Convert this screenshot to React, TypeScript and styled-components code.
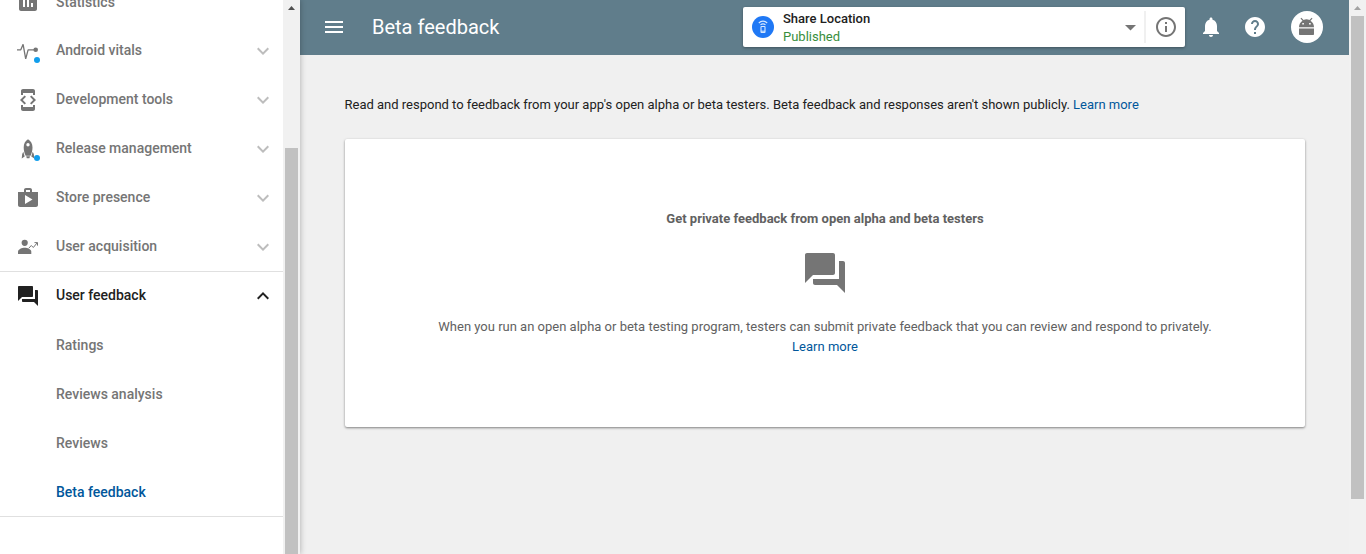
import React from "react";
import styled, { createGlobalStyle } from "styled-components";

const GlobalStyle = createGlobalStyle`
  * { box-sizing: border-box; }
  html, body { margin: 0; padding: 0; overflow: hidden; }
  body { font-family: Roboto, "Liberation Sans", sans-serif; font-size: 13px; color: #212121; }
  a { color: #01579b; text-decoration: none; }
`;

const Page = styled.div`
  display: flex;
  width: 100vw;
  height: 100vh;
  overflow: hidden;
  background: #f0f0f0;
`;

const Sidebar = styled.aside`
  display: flex;
  flex: none;
  width: 300px;
  z-index: 1;
  background: #fff;
  box-shadow: 0 0 6px rgba(0, 0, 0, 0.3);
`;

const Nav = styled.nav`
  width: 283px;
  margin-top: -23px;
`;

const Track = styled.div`
  display: flex;
  flex-direction: column;
  align-items: center;
  flex: none;
  width: 17px;
  height: 100%;
  background: #f1f1f1;
`;

const TrackArrow = styled.div<{ $color: string }>`
  width: 7px;
  height: 4px;
  margin-top: 6px;
  background: ${(p) => p.$color};
  clip-path: polygon(50% 0, 100% 100%, 0 100%);
`;

const Thumb = styled.div<{ $gap: number; $height: number }>`
  flex: none;
  width: 13px;
  height: ${(p) => p.$height}px;
  margin-top: ${(p) => p.$gap}px;
  background: #c1c1c1;
`;

const NavRow = styled.div<{ $open?: boolean }>`
  display: flex;
  align-items: flex-start;
  height: 49px;
  padding: ${(p) => (p.$open ? "12px" : "13px")} 8px 0 16px;
  border-top: ${(p) => (p.$open ? "1px solid #e0e0e0" : "0")};
  color: ${(p) => (p.$open ? "#212121" : "#757575")};
`;

const NavIcon = styled.span`
  position: relative;
  width: 24px;
  height: 24px;
  margin-right: 16px;
`;

const AlertDot = styled.i`
  position: absolute;
  left: 18px;
  top: 18px;
  width: 6px;
  height: 6px;
  border-radius: 50%;
  background: #119eec;
`;

const NavLabel = styled.span<{ $leaf?: boolean }>`
  flex: 1;
  font-size: 14px;
  font-weight: 500;
  line-height: ${(p) => (p.$leaf ? 24 : 22)}px;
`;

const Chevron = styled.span<{ $open?: boolean }>`
  width: 24px;
  height: 24px;
  color: ${(p) => (p.$open ? "#212121" : "#bdbdbd")};
`;

const SubList = styled.div`
  padding-top: 1px;
  border-bottom: 1px solid #e0e0e0;
`;

const SubItem = styled.div<{ $active?: boolean }>`
  height: 49px;
  padding-left: 56px;
  font-size: 14px;
  font-weight: 500;
  line-height: 48px;
  color: ${(p) => (p.$active ? "#01579b" : "#757575")};
  &:last-child { height: 48px; }
`;

const Main = styled.main`
  flex: 1;
  min-width: 0;
`;

const Header = styled.header`
  display: flex;
  align-items: center;
  height: 55px;
  padding: 0 26px 1px 22px;
  background: #607d8b;
  color: #fff;
`;

const Title = styled.h1`
  flex: 1;
  margin: 0 0 0 26px;
  font-size: 20px;
  font-weight: 400;
  line-height: 24px;
`;

const AppPicker = styled.div`
  display: flex;
  align-items: center;
  width: 442px;
  height: 40px;
  padding: 0 7px 0 9px;
  border-radius: 2px;
  background: #fff;
  color: #757575;
  box-shadow: 0 1px 3px rgba(0, 0, 0, 0.35);
`;

const AppText = styled.div`
  flex: 1;
  margin-left: 9px;
  line-height: 18px;
  margin-top: 1px;
`;

const AppName = styled.div`
  font-weight: 500;
  color: #212121;
`;

const AppStatus = styled.div`
  color: #388e3c;
`;

const Divider = styled.div`
  width: 2px;
  height: 32px;
  margin: 0 8px 0 3px;
  background: #f0f0f0;
`;

const Actions = styled.div`
  display: flex;
  align-items: center;
  gap: 20px;
  margin-left: 14px;
`;

const Avatar = styled.div`
  width: 32px;
  height: 32px;
  margin-left: 4px;
  border-radius: 50%;
  background: #fff;
  color: #757575;
`;

const Content = styled.div`
  padding: 40px 44px 0 45px;
`;

const Intro = styled.p`
  margin: 0 0 24px -0.5px;
  line-height: 20px;
  letter-spacing: -0.004px;
`;

const Card = styled.section`
  display: flex;
  flex-direction: column;
  align-items: center;
  height: 288px;
  padding-top: 70px;
  border-radius: 2px;
  background: #fff;
  box-shadow: 0 1px 3px rgba(0, 0, 0, 0.25), 0 1px 2px rgba(0, 0, 0, 0.25);
  text-align: center;
  line-height: 20px;
  color: #616161;
`;

const CardTitle = styled.h2`
  margin: 0 0 20px;
  font-size: 13px;
  font-weight: 700;
  line-height: 20px;
`;

const CardIcon = styled.div`
  height: 48px;
  margin-bottom: 20px;
  color: #757575;
`;

const CardText = styled.p`
  width: 800px;
  margin: 0;
`;

const Svg = styled.svg`
  display: block;
  flex: none;
  fill: currentColor;
`;

function Glyph({ d, size = 24 }: { d: string; size?: number }) {
  return (
    <Svg width={size} height={size} viewBox="0 0 24 24">
      <path d={d} />
    </Svg>
  );
}

const paths = {
  stats: "M19 3H5c-1.1 0-2 .9-2 2v14c0 1.1.9 2 2 2h14c1.1 0 2-.9 2-2V5c0-1.1-.9-2-2-2zM9 17H7v-7h2v7zm4 0h-2V7h2v10zm4 0h-2v-4h2v4z",
  dev: "M7 5h10v2h2V3c0-1.1-.9-1.99-2-1.99L7 1c-1.1 0-2 .9-2 2v4h2V5zm8.41 11.59L20 12l-4.59-4.59L14 8.83 17.17 12 14 15.17l1.41 1.42zM10 15.17L6.83 12 10 8.83 8.59 7.41 4 12l4.59 4.59L10 15.17zM17 19H7v-2H5v4c0 1.1.9 2 2 2h10c1.1 0 2-.9 2-2v-4h-2v2z",
  shop: "M16 6V4c0-1.11-.89-2-2-2h-4c-1.11 0-2 .89-2 2v2H2v13c0 1.11.89 2 2 2h16c1.11 0 2-.89 2-2V6h-6zm-6-2h4v2h-4V4zM9 18V9l7.5 4.500L9 18z",
  forum: "M21 6h-2v9H6v2c0 .55.45 1 1 1h11l4 4V7c0-.55-.45-1-1-1zm-4 6V3c0-.55-.45-1-1-1H3c-.55 0-1 .45-1 1v14l4-4h10c.55 0 1-.45 1-1z",
  down: "M7.41 8.59L12 13.17l4.59-4.58L18 10l-6 6-6-6 1.41-1.41z",
  up: "M7.41 15.41L12 10.83l4.59 4.58L18 14l-6-6-6 6z",
  menu: "M3 18h18v-2H3v2zm0-5h18v-2H3v2zm0-7v2h18V6H3z",
  caret: "M8 10h11l-5.500 5.500z",
  info: "M11 17h2v-6h-2v6zm1-15C6.48 2 2 6.48 2 12s4.48 10 10 10 10-4.48 10-10S17.52 2 12 2zm0 18c-4.41 0-8-3.59-8-8s3.59-8 8-8 8 3.59 8 8-3.59 8-8 8zM11 9h2V7h-2v2z",
  bell: "M12 22c1.1 0 2-.9 2-2h-4c0 1.1.89 2 2 2zm6-6v-5c0-3.07-1.64-5.64-4.5-6.32V4c0-.83-.67-1.5-1.5-1.5s-1.5.67-1.5 1.5v.68C7.63 5.36 6 7.92 6 11v5l-2 2v1h16v-1l-2-2z",
  help: "M12 2C6.48 2 2 6.48 2 12s4.48 10 10 10 10-4.48 10-10S17.52 2 12 2zm1 17h-2v-2h2v2zm2.07-7.75l-.9.92C13.45 12.9 13 13.5 13 15h-2v-.5c0-1.1.45-2.1 1.17-2.83l1.24-1.26c.37-.36.59-.86.59-1.41 0-1.1-.9-2-2-2s-2 .9-2 2H8c0-2.21 1.79-4 4-4s4 1.79 4 4c0 .88-.36 1.68-.93 2.25z",
};

function VitalsIcon() {
  return (
    <Svg width="24" height="24" viewBox="0 0 24 24">
      <path d="M1 10.800h3.800l2.300-5.500 2.600 14.500 2.400-9H19" fill="none" stroke="currentColor" strokeWidth="1.300" strokeLinejoin="bevel" />
      <circle cx="19.700" cy="10.800" r="2.300" />
    </Svg>
  );
}

function RocketIcon() {
  return (
    <Svg width="24" height="24" viewBox="0 0 24 24">
      <path fillRule="evenodd" d="M12 2.300C9.200 3.800 7.700 6.900 7.700 10.500c0 3.200.8 6 2 8.200h4.800c1.200-2.200 2-5 2-8.200 0-3.600-1.700-6.700-4.500-8.200zM12 6a1.700 1.700 0 1 1 0 3.400A1.700 1.700 0 0 1 12 6z" />
      <path d="M7.300 14.800L6.200 17 5.700 21.500l3-2zM16.700 14.800l1.100 2.200.5 4.500-3-2zM10.200 19.300h3.800l-.6 2h-2.600z" />
    </Svg>
  );
}

function AcquisitionIcon() {
  return (
    <Svg width="24" height="24" viewBox="0 0 24 24">
      <circle cx="8.700" cy="7.800" r="3.100" />
      <path d="M2 19v-2.200c0-2.500 4-4 6.700-4s6.600 1.500 6.600 4V19z" />
      <path d="M12.800 13.200l2.500-2.700 2 2 3.900-4.700M18.500 7.600h3v3" fill="none" stroke="currentColor" strokeWidth="1" />
    </Svg>
  );
}

function AppLogo() {
  return (
    <Svg width="22" height="22" viewBox="0 0 22 22">
      <circle cx="11" cy="11" r="11" fill="#1f78f5" />
      <g fill="none" stroke="#d6e8ff" strokeWidth="1.100">
        <path d="M6.800 7c2.400-2.500 6-2.500 8.400 0M8.500 8.900c1.500-1.300 3.500-1.300 5 0" />
        <rect x="9" y="10.500" width="4" height="6" rx=".5" />
        <path d="M9 15.200h4" />
      </g>
    </Svg>
  );
}

function RobotIcon() {
  return (
    <Svg width="32" height="32" viewBox="0 0 32 32">
      <path d="M8 17.500h15V23c0 .6-.4 1-1 1H9c-.6 0-1-.4-1-1z" />
      <path fillRule="evenodd" d="M8 16.300c0-3 1.300-5.300 3.500-6.600L9.500 7.500l.8-.8 2.300 2.200c1.800-.8 4-.8 5.800 0l2.300-2.200.8.800-2 2.200c2.200 1.300 3.500 3.600 3.500 6.600zM11.300 12v1.600h1.600v-1.600zM18.100 12v1.600h1.600v-1.600z" />
    </Svg>
  );
}

const sections = [
  { label: "Statistics", icon: <Glyph d={paths.stats} />, leaf: true },
  { label: "Android vitals", icon: <VitalsIcon />, alert: true },
  { label: "Development tools", icon: <Glyph d={paths.dev} /> },
  { label: "Release management", icon: <RocketIcon />, alert: true },
  { label: "Store presence", icon: <Glyph d={paths.shop} /> },
  { label: "User acquisition", icon: <AcquisitionIcon /> },
  { label: "User feedback", icon: <Glyph d={paths.forum} />, open: true },
];

const feedbackPages = ["Ratings", "Reviews analysis", "Reviews", "Beta feedback"];

export default function App() {
  return (
    <Page>
      <GlobalStyle />
      <Sidebar>
        <Nav>
          {sections.map((s) => (
            <NavRow key={s.label} $open={s.open}>
              <NavIcon>
                {s.icon}
                {s.alert && <AlertDot />}
              </NavIcon>
              <NavLabel $leaf={s.leaf}>{s.label}</NavLabel>
              {!s.leaf && (
                <Chevron $open={s.open}>
                  <Glyph d={s.open ? paths.up : paths.down} />
                </Chevron>
              )}
            </NavRow>
          ))}
          <SubList>
            {feedbackPages.map((p) => (
              <SubItem key={p} $active={p === "Beta feedback"}>{p}</SubItem>
            ))}
          </SubList>
        </Nav>
        <Track>
          <TrackArrow $color="#505050" />
          <Thumb $gap={138} $height={406} />
        </Track>
      </Sidebar>
      <Main>
        <Header>
          <Glyph d={paths.menu} />
          <Title>Beta feedback</Title>
          <AppPicker>
            <AppLogo />
            <AppText>
              <AppName>Share Location</AppName>
              <AppStatus>Published</AppStatus>
            </AppText>
            <Glyph d={paths.caret} />
            <Divider />
            <Glyph d={paths.info} />
          </AppPicker>
          <Actions>
            <Glyph d={paths.bell} />
            <Glyph d={paths.help} />
            <Avatar><RobotIcon /></Avatar>
          </Actions>
        </Header>
        <Content>
          <Intro>
            Read and respond to feedback from your app's open alpha or beta testers. Beta feedback and responses aren't shown publicly. <a>Learn more</a>
          </Intro>
          <Card>
            <CardTitle>Get private feedback from open alpha and beta testers</CardTitle>
            <CardIcon><Glyph d={paths.forum} size={48} /></CardIcon>
            <CardText>
              When you run an open alpha or beta testing program, testers can submit private feedback that you can review and respond to privately.
              <br />
              <a>Learn more</a>
            </CardText>
          </Card>
        </Content>
      </Main>
      <Track>
        <TrackArrow $color="#a3a3a3" />
        <Thumb $gap={6} $height={483} />
      </Track>
    </Page>
  );
}
